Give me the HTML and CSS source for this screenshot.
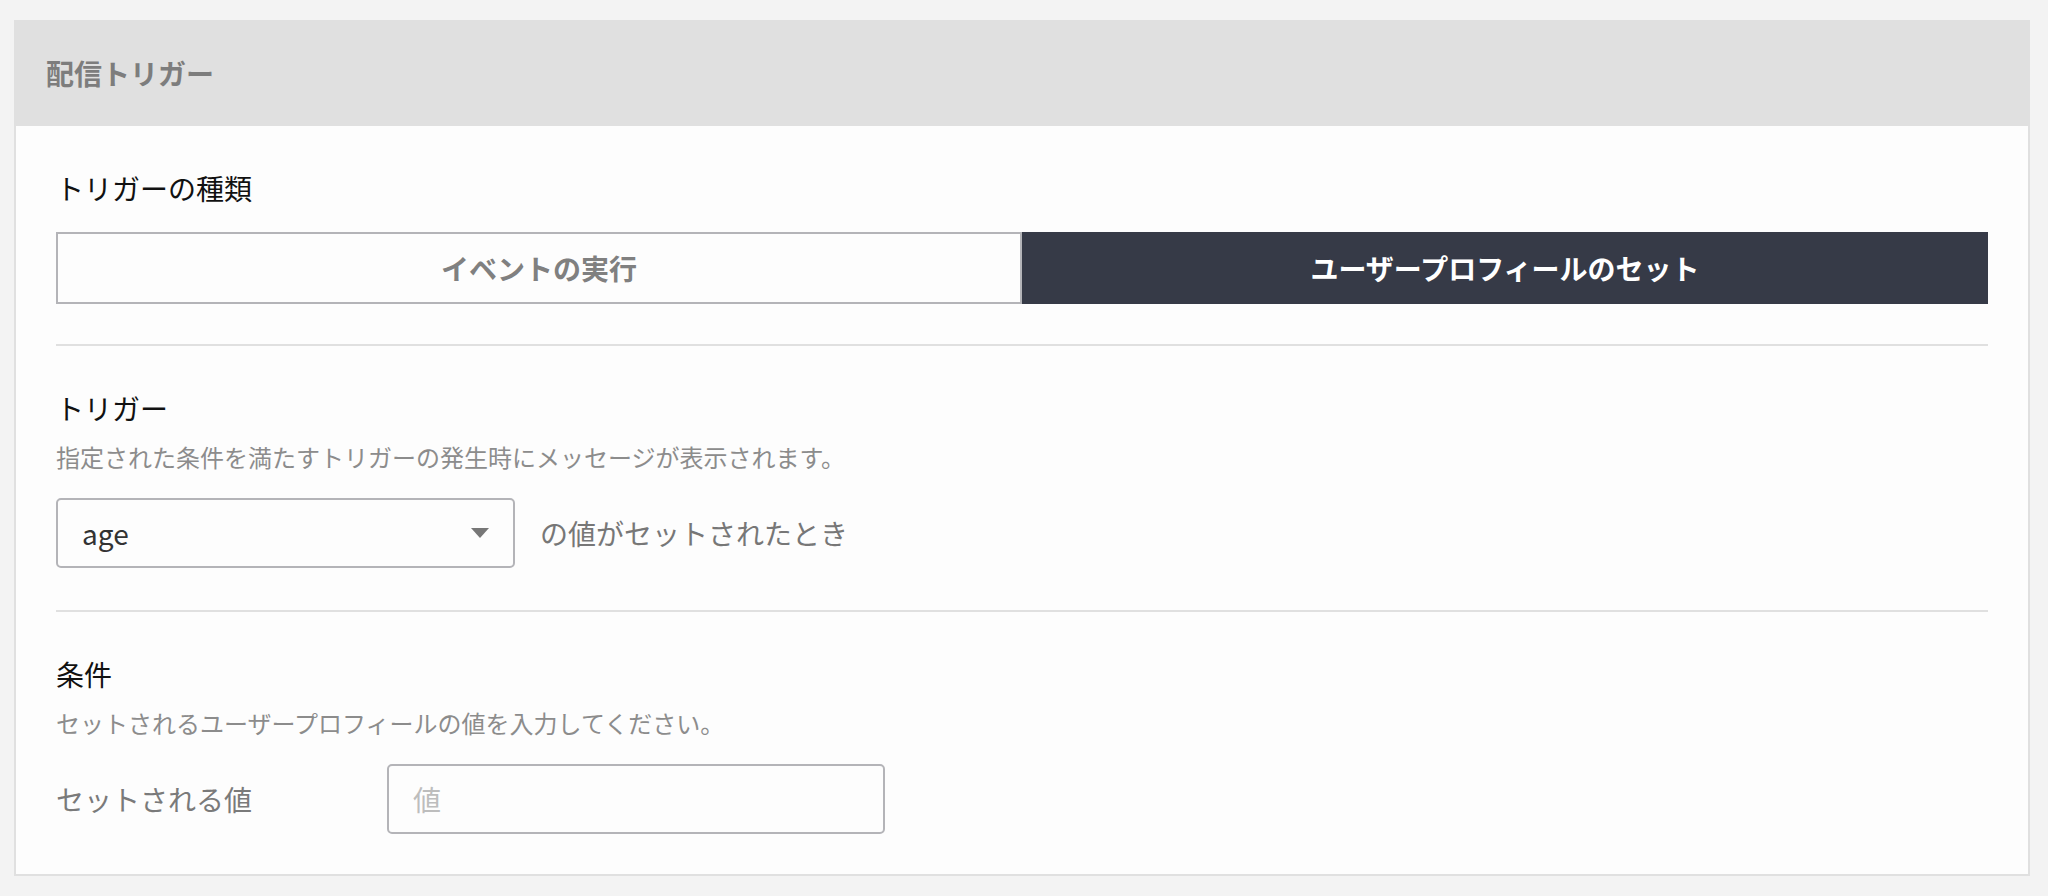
FILE: index.html
```html
<!DOCTYPE html>
<html lang="ja">
<head>
<meta charset="utf-8">
<title>配信トリガー</title>
<link rel="stylesheet" href="styles.css">
</head>
<body>
<div class="card">
  <div class="card-header">配信トリガー</div>
  <div class="card-body">
    <section class="section">
      <h2 class="section-title">トリガーの種類</h2>
      <div class="toggle">
        <button class="toggle-btn">イベントの実行</button>
        <button class="toggle-btn is-active">ユーザープロフィールのセット</button>
      </div>
    </section>
    <section class="section">
      <h2 class="section-title">トリガー</h2>
      <p class="section-desc">指定された条件を満たすトリガーの発生時にメッセージが表示されます。</p>
      <div class="trigger-row">
        <div class="select">
          <span class="select-value">age</span>
          <svg class="select-arrow" width="18" height="10" viewBox="0 0 18 10"><path d="M0 0 H18 L9 10 Z" fill="#777"/></svg>
        </div>
        <span class="trigger-suffix">の値がセットされたとき</span>
      </div>
    </section>
    <section class="section section-last">
      <h2 class="section-title">条件</h2>
      <p class="section-desc">セットされるユーザープロフィールの値を入力してください。</p>
      <div class="field-row">
        <label class="field-label">セットされる値</label>
        <input class="text-input" type="text" placeholder="値">
      </div>
    </section>
  </div>
</div>
</body>
</html>
```
FILE: styles.css
```css
* { box-sizing: border-box; }
html, body { margin: 0; padding: 0; }
body {
  background: #f3f3f3;
  padding: 20px 18px 0 14px;
  font-family: "Noto Sans CJK JP", "Noto Sans", sans-serif;
  color: #111;
}
.card {
  background: #fdfdfd;
  border: 2px solid #e0e0e0;
}
.card-header {
  background: #e0e0e0;
  height: 104px;
  display: flex;
  align-items: center;
  padding: 0 0 2px 30px;
  font-size: 28px;
  font-weight: 700;
  color: #7d7d7d;
}
.card-body {
  padding: 0 40px;
}
.section {
  padding: 42px 0 40px;
  border-bottom: 2px solid #e0e0e0;
}
.section:nth-child(2) { padding-bottom: 42px; }
.section-last { border-bottom: none; padding-bottom: 40px; }
.section-title {
  margin: 0;
  font-size: 28px;
  font-weight: 400;
  line-height: 40px;
  color: #111;
}
.section-desc {
  margin: 12px 0 0;
  font-size: 24px;
  line-height: 34px;
  color: #8c8c8c;
}
.toggle {
  margin-top: 24px;
  display: grid;
  grid-template-columns: 1fr 1fr;
  height: 72px;
}
.toggle-btn {
  font-family: inherit;
  font-size: 28px;
  font-weight: 700;
  color: #808080;
  background: #fdfdfd;
  border: 2px solid #b4b4b8;
  margin: 0;
  padding: 0;
  cursor: pointer;
}
.toggle-btn.is-active {
  background: #363a47;
  border-color: #363a47;
  color: #fff;
}
.trigger-row {
  margin-top: 24px;
  display: flex;
  align-items: center;
  gap: 25px;
}
.select {
  width: 459px;
  height: 70px;
  border: 2px solid #b4b4b8;
  border-radius: 5px;
  background: #fdfdfd;
  display: flex;
  align-items: center;
  justify-content: space-between;
  padding: 0 24px 0 24px;
}
.select-value {
  font-size: 28px;
  color: #333;
}
.select-arrow { display: block; }
.trigger-suffix {
  font-size: 28px;
  color: #777;
}
.field-row {
  margin-top: 24px;
  display: flex;
  align-items: center;
}
.field-label {
  width: 331px;
  font-size: 28px;
  color: #7a7a7a;
}
.text-input {
  width: 498px;
  height: 70px;
  border: 2px solid #b4b4b8;
  border-radius: 5px;
  background: #fdfdfd;
  padding: 0 24px;
  font-family: inherit;
  font-size: 28px;
  color: #333;
  outline: none;
}
.text-input::placeholder { color: #bdbdbd; }
```
